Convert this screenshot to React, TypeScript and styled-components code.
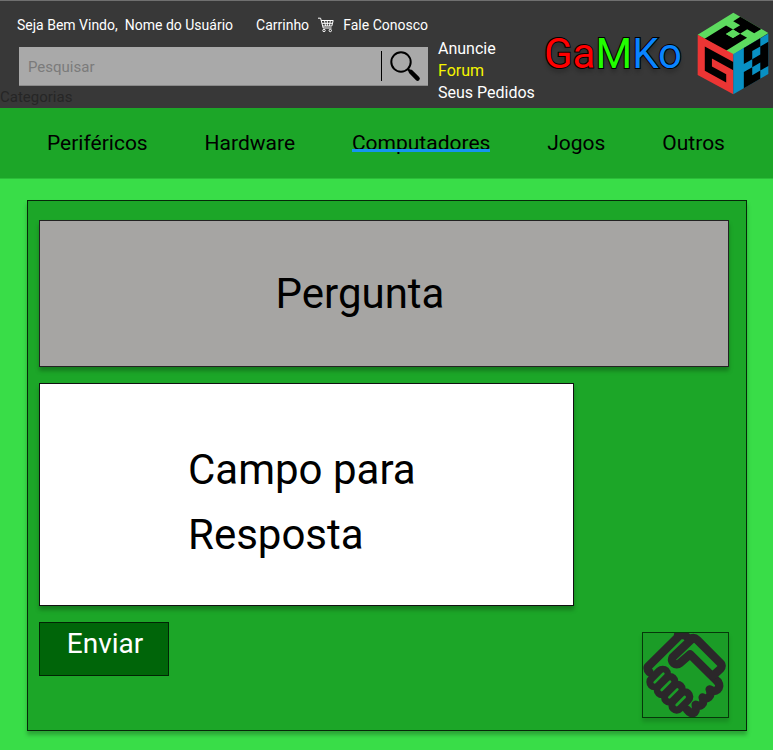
import React from "react";
import styled, { createGlobalStyle } from "styled-components";

const Global = createGlobalStyle`
  *, *::before, *::after { box-sizing: border-box; }
  body { margin: 0; background: #39dd48; font-family: Roboto, "Noto Sans", sans-serif; color: #000; }
  a { color: inherit; text-decoration: none; }
`;

const Header = styled.header`
  display: flex;
  align-items: flex-start;
  min-height: 108px;
  background: #383838;
  border-top: 1px solid #707070;
  color: #fff;
`;

const HeaderMain = styled.div`
  flex: 1;
  min-width: 0;
`;

const TopLine = styled.div`
  display: flex;
  align-items: center;
  gap: 7px;
  height: 46px;
  padding: 2px 0 0 17px;
  font-size: 14px;
  white-space: nowrap;
`;

const TopLinks = styled.nav`
  display: flex;
  align-items: center;
  justify-content: space-between;
  gap: 8px;
  flex: 1;
  margin-left: 16px;
`;

const Search = styled.form`
  display: flex;
  align-items: center;
  height: 39px;
  margin-left: 19px;
  background: #a9a9a9;
  border-bottom: 1px solid #8a8a8a;
`;

const SearchInput = styled.input`
  flex: 1;
  min-width: 0;
  height: 30px;
  padding: 2px 9px 0;
  border: 0;
  border-right: 1px solid #000;
  background: transparent;
  font: 15px Roboto, sans-serif;
  &::placeholder { color: #7b7b7b; opacity: 1; }
`;

const SearchButton = styled.button`
  display: flex;
  align-items: center;
  justify-content: center;
  width: 46px;
  height: 38px;
  padding: 0;
  border: 0;
  background: transparent;
`;

const Categories = styled.div`
  font-size: 15px;
  line-height: 22px;
  color: #262626;
`;

const SideLinks = styled.nav`
  display: flex;
  flex-direction: column;
  width: 100px;
  margin: 37px 6px 0 10px;
  font-size: 16px;
  line-height: 22px;
  white-space: nowrap;
`;

const SideLink = styled.a<{ $active?: boolean }>`
  color: ${(p) => (p.$active ? "#f5f500" : "#fff")};
`;

const Brand = styled.a`
  display: flex;
  margin-right: 4px;
`;

const BrandName = styled.span`
  width: 136px;
  margin: 28px 17px 0 0;
  font-size: 42px;
  line-height: 50px;
  -webkit-text-stroke: 2px #000;
  paint-order: stroke fill;
  text-shadow: 0 4px 4px rgba(0, 0, 0, 0.25);
`;

const Tint = styled.span<{ $color: string }>`
  color: ${(p) => p.$color};
`;

const CubeSvg = styled.svg`
  margin-top: 11px;
`;

const Menu = styled.nav`
  display: flex;
  align-items: center;
  justify-content: space-between;
  height: 71px;
  padding: 0 48px 0 47px;
  background: #1ca628;
  border-bottom: 1px solid #2cbd39;
  font-size: 21px;
`;

const MenuLink = styled.a<{ $active?: boolean }>`
  position: relative;
  line-height: 24px;
  ${(p) =>
    p.$active &&
    `&::after {
      content: "";
      position: absolute;
      left: 0;
      right: 0;
      bottom: 3px;
      height: 3px;
      background: #1595f0;
    }`}
`;

const Panel = styled.main`
  display: flex;
  flex-direction: column;
  gap: 16px;
  margin: 21px 26px 19px 27px;
  padding: 19px 17px 12px 11px;
  background: #1ca628;
  border: 1px solid #06280a;
  box-shadow: 0 4px 4px rgba(0, 0, 0, 0.25);
`;

const Question = styled.h1`
  display: flex;
  align-items: center;
  justify-content: center;
  height: 147px;
  margin: 0;
  padding-right: 48px;
  background: #a6a5a3;
  border: 1px solid #222;
  box-shadow: 0 4px 4px rgba(0, 0, 0, 0.25);
  font-size: 42px;
  font-weight: 400;
`;

const Answer = styled.textarea`
  display: block;
  width: 77.5%;
  height: 223px;
  padding: 53px 148px;
  border: 1px solid #111;
  background: #fff;
  box-shadow: 0 4px 4px rgba(0, 0, 0, 0.25);
  font: 42px/65px Roboto, sans-serif;
  resize: none;
  overflow: hidden;
  &::placeholder { color: #000; opacity: 1; }
`;

const Actions = styled.div`
  display: flex;
  align-items: flex-start;
  justify-content: space-between;
`;

const SendButton = styled.button`
  width: 130px;
  height: 54px;
  padding: 0 0 11px 2px;
  border: 1px solid #012404;
  background: #006509;
  color: #fff;
  font: 28px Roboto, sans-serif;
`;

const DealButton = styled.button`
  width: 87px;
  height: 86px;
  margin-top: 10px;
  padding: 0;
  border: 1px solid #06380a;
  background: #1b9c27;
  box-shadow: 0 4px 4px rgba(0, 0, 0, 0.15);
`;

const DealSvg = styled.svg`
  display: block;
`;

const CartIcon = () => (
  <svg width="16" height="16" viewBox="0 0 16 16" fill="none" stroke="#fff" aria-hidden="true">
    <path d="M0 1.2h2.6L5.2 11h8.4M3.2 3.5h12L13.8 9H4.8M4 6.3h10.4M6.5 3.5l1 5.5M9.3 3.5V9M12.3 3.5l-.8 5.5" />
    <circle cx="6" cy="13.5" r="1.2" />
    <circle cx="12.3" cy="13.5" r="1.2" />
  </svg>
);

const SearchIcon = () => (
  <svg width="32" height="32" viewBox="0 0 32 32" fill="none" stroke="#000" aria-hidden="true">
    <circle cx="12" cy="12" r="9.7" strokeWidth="2" />
    <path d="M18.8 19l3 3" strokeWidth="2.4" />
    <path d="M21.8 21.8l6.8 6.8" strokeWidth="4.4" strokeLinecap="round" />
  </svg>
);

/* Each face is a 5x5 letter grid projected onto its side of the cube. */
const Cube = () => (
  <CubeSvg width="72" height="83" viewBox="36 20 216 249" role="img" aria-label="GaMKo">
    <g transform="matrix(21 12.2 21.4 -13.2 38 88)">
      <path fill="#5ddb5f" d="M0 0H5V5H0Z" />
      <path d="M1 0H4V3H3V2H2V3H1ZM1 4H2V3H3V4H4V5H1Z" />
      <path fill="#5ddb5f" d="M2 2H3V3H2Z" />
    </g>
    <g transform="matrix(21.4 11.6 0 24.2 38 88)">
      <path fill="#ec3534" d="M0 0H5V5H0Z" />
      <path d="M1 1H5V2H2V3H4V4H1Z" />
    </g>
    <g transform="matrix(21 -12.2 0 24.2 145 146)">
      <path fill="#0890c4" d="M0 0H5V5H0Z" />
      <path d="M1.5 0H3.85V1H2.7V2H1.5ZM2.7 2H3.85V1H5V4H3.85V3H2.7ZM1.5 3H2.7V4H3.85V5H1.5Z" />
    </g>
  </CubeSvg>
);

const DealIcon = () => (
  <DealSvg width="85" height="84" viewBox="39 39 255 252" fill="none" stroke="#2b272a" strokeWidth="25" strokeLinecap="round" strokeLinejoin="round" aria-hidden="true">
    <path d="M150 45L53 141Q51 149 58 156M144 45H164L174 54" />
    <path d="M188 55L128 112C120 126 137 140 150 129L180 103L264 186" />
    <path d="M180 57Q192 50 202 60L272 130Q278 138 271 147L250 166" />
    <path d="M264 186C276 204 256 222 239 208C247 229 232 242 218 232C225 253 211 262 197 254C201 275 191 286 178 276L171 269" />
    <path d="M98 162L74 186M120 184L96 210M142 207L118 232M165 230L140 256" strokeWidth="50" />
    <path d="M100 161L74 187M120 185L95 210M142 208L118 232M164 231L140 255" stroke="#1b9c27" strokeWidth="8" />
  </DealSvg>
);

const categories = ["Periféricos", "Hardware", "Computadores", "Jogos", "Outros"];

export default function App() {
  return (
    <>
      <Global />
      <Header>
        <HeaderMain>
          <TopLine>
            <span>Seja Bem Vindo,</span>
            <span>Nome do Usuário</span>
            <TopLinks>
              <a href="#carrinho">Carrinho</a>
              <CartIcon />
              <a href="#contato">Fale Conosco</a>
            </TopLinks>
          </TopLine>
          <Search>
            <SearchInput type="search" placeholder="Pesquisar" aria-label="Pesquisar" />
            <SearchButton type="button" aria-label="Buscar">
              <SearchIcon />
            </SearchButton>
          </Search>
          <Categories>Categorias</Categories>
        </HeaderMain>
        <SideLinks>
          <SideLink href="#anuncie">Anuncie</SideLink>
          <SideLink href="#forum" $active>Forum</SideLink>
          <SideLink href="#pedidos">Seus Pedidos</SideLink>
        </SideLinks>
        <Brand href="#inicio">
          <BrandName>
            <Tint $color="#ff0000">Ga</Tint>
            <Tint $color="#22ff00">M</Tint>
            <Tint $color="#0a84ff">Ko</Tint>
          </BrandName>
          <Cube />
        </Brand>
      </Header>
      <Menu>
        {categories.map((name) => (
          <MenuLink key={name} href={`#${name}`} $active={name === "Computadores"}>
            {name}
          </MenuLink>
        ))}
      </Menu>
      <Panel>
        <Question>Pergunta</Question>
        <Answer placeholder="Campo para Resposta" aria-label="Campo para Resposta" />
        <Actions>
          <SendButton type="button">Enviar</SendButton>
          <DealButton type="button" aria-label="Fechar acordo">
            <DealIcon />
          </DealButton>
        </Actions>
      </Panel>
    </>
  );
}
